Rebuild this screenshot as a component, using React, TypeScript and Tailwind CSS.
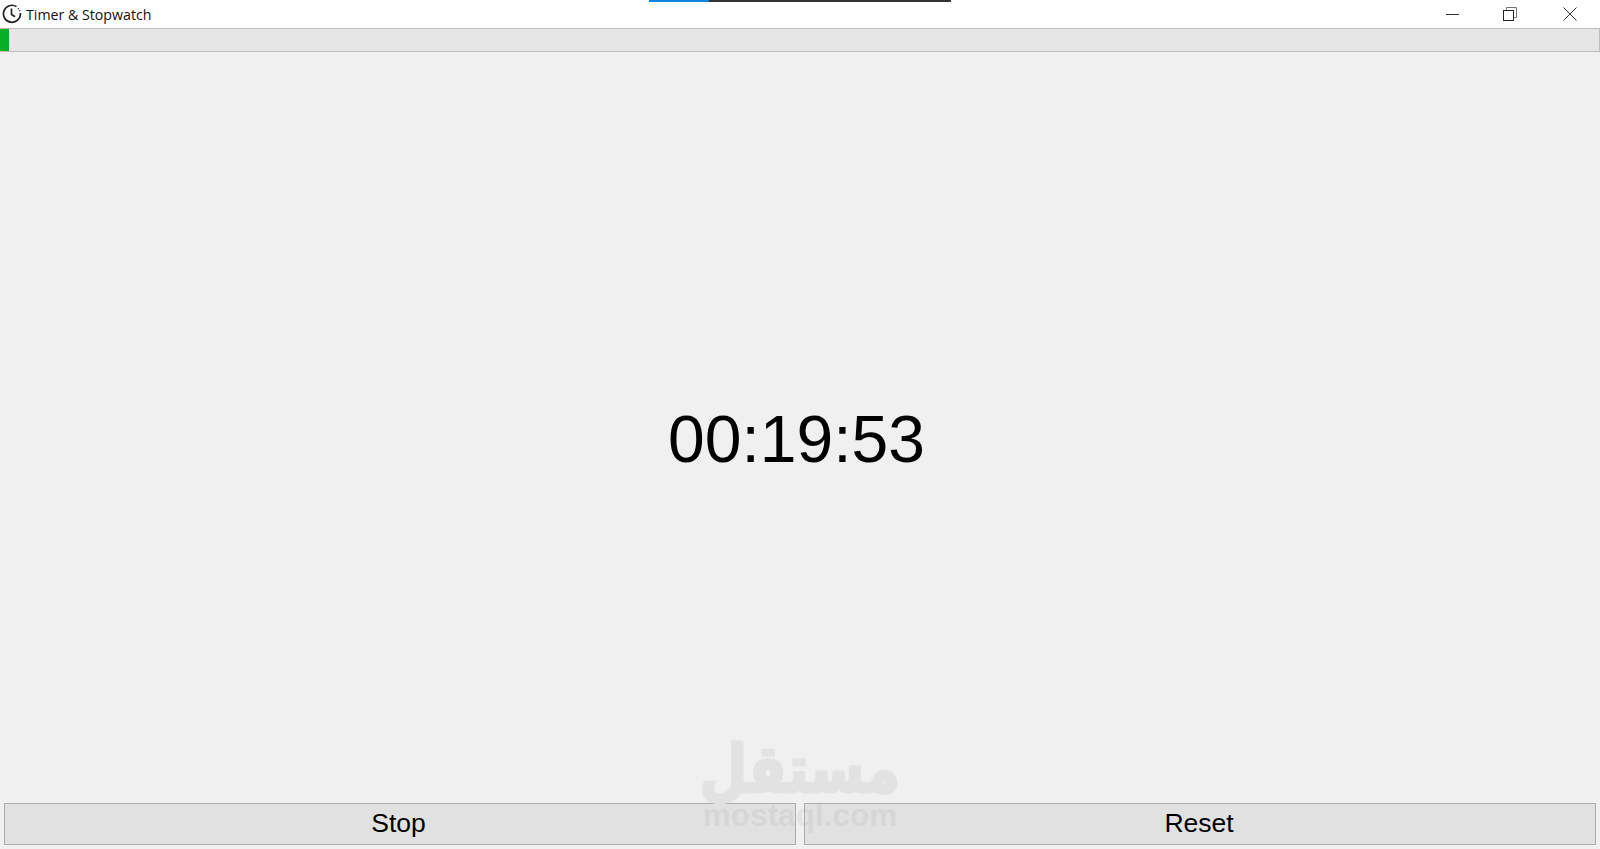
export default function App() {
  return (
    <div className="relative flex h-[849px] w-[1600px] flex-col overflow-hidden bg-[#f0f0f0] font-['Liberation_Sans',sans-serif] text-black">
      {/* title bar */}
      <div className="relative flex h-[28px] shrink-0 items-center bg-white">
        <svg className="ml-[2px] h-[20px] w-[20px]" viewBox="0 0 20 20" fill="none" stroke="#222" strokeWidth="1.7">
          <path d="M14.5 2.6A8.5 8.5 0 1 0 18.4 9" />
          <path d="M9.5 4.5v6l3.6 2.2" />
          <circle cx="16.4" cy="4.8" r="0.7" fill="#222" stroke="none" />
          <circle cx="17.8" cy="6.8" r="0.7" fill="#222" stroke="none" />
        </svg>
        <span className="ml-[4px] mt-px font-['Open_Sans',sans-serif] text-[14.2px] text-[#111]">Timer &amp; Stopwatch</span>

        <div className="absolute left-[649px] top-0 flex h-[2px] w-[302px]">
          <div className="w-[60px] bg-[#0a84e0]" />
          <div className="flex-1 bg-[#333]" />
        </div>

        <div className="ml-auto flex items-center">
          <div className="mr-[44px] h-px w-[13px] bg-[#333]" />
          <svg className="mr-[46px] h-[14px] w-[14px]" viewBox="0 0 14 14" fill="none" stroke="#222">
            <rect x="0.5" y="3.5" width="10" height="10" />
            <path d="M3.5 3V0.5H13.5V10.5H11" stroke="#777" />
          </svg>
          <svg className="mr-[23px] h-[14px] w-[14px]" viewBox="0 0 14 14" fill="none" stroke="#333">
            <path d="M0.5 0.5L13.5 13.5M13.5 0.5L0.5 13.5" />
          </svg>
        </div>
      </div>

      {/* progress */}
      <div className="h-[24px] shrink-0 border border-[#bcbcbc] border-l-0 bg-[#e6e6e6]">
        <div className="h-full w-[9px] bg-[#06b025]" />
      </div>

      {/* time */}
      <div className="flex flex-1 items-center justify-center">
        <span className="mr-[7px] mt-[22px] text-[66px] leading-none">00:19:53</span>
      </div>

      {/* actions */}
      <div className="mb-[4px] grid h-[42px] shrink-0 grid-cols-2 gap-[8px] px-[4px]">
        <button className="border border-[#adadad] bg-[#e1e1e1] pr-[3px] text-[26.5px]">Stop</button>
        <button className="border border-[#adadad] bg-[#e1e1e1] pr-[2px] text-[26.5px]">Reset</button>
      </div>

      {/* watermark */}
      <div className="pointer-events-none absolute left-[703px] top-[738px] flex w-[194px] flex-col items-center">
        <span className="h-[62px] scale-x-[0.83] font-['DejaVu_Sans',sans-serif] text-[66px] font-bold leading-[64px] text-[#e2e2e2] [-webkit-text-stroke:3px_#e2e2e2]">مستقل</span>
        <span className="text-[31.5px] font-bold leading-[30px] text-[#8a8a8a]/15">mostaql.com</span>
      </div>
    </div>
  );
}
